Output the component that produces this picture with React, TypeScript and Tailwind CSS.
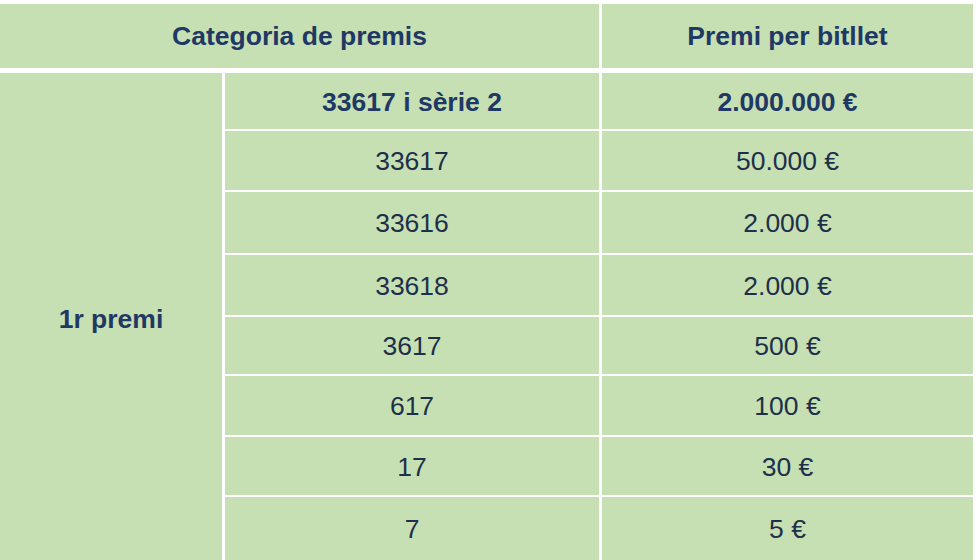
import React from 'react';

const rows: { num: string; prize: string; height: string; bold?: boolean }[] = [
  { num: '33617 i sèrie 2', prize: '2.000.000 €', height: 'h-[56px]', bold: true },
  { num: '33617', prize: '50.000 €', height: 'h-[59px]' },
  { num: '33616', prize: '2.000 €', height: 'h-[61px]' },
  { num: '33618', prize: '2.000 €', height: 'h-[60px]' },
  { num: '3617', prize: '500 €', height: 'h-[57px]' },
  { num: '617', prize: '100 €', height: 'h-[59px]' },
  { num: '17', prize: '30 €', height: 'h-[58px]' },
  { num: '7', prize: '5 €', height: 'h-[63px]' },
];

const App: React.FC = () => {
  return (
    <div
      className="w-[980px] h-[560px] overflow-hidden bg-white pt-1 pr-[7px] text-[26.5px] text-[#1f3864]"
      style={{ fontFamily: '"Liberation Sans", Arial, sans-serif' }}
    >
      <div className="grid h-[64px] grid-cols-[599px_1fr] gap-x-[3px]">
        <div className="flex items-center justify-center bg-[#c6e0b4] pt-[2px] font-bold">Categoria de premis</div>
        <div className="flex items-center justify-center bg-[#c6e0b4] pt-[2px] font-bold">Premi per bitllet</div>
      </div>
      <div className="mt-[5px] flex gap-x-[3px]">
        <div className="flex w-[222px] shrink-0 items-center justify-center bg-[#c6e0b4] pt-[6px] font-bold">
          1r premi
        </div>
        <div className="flex flex-1 flex-col gap-y-[2px]">
          {rows.map((row) => (
            <div key={row.num + row.prize} className={`grid grid-cols-[374px_1fr] gap-x-[3px] ${row.height}`}>
              <div className={`flex items-center justify-center bg-[#c6e0b4] pt-[3px] ${row.bold ? 'font-bold' : 'text-[#1e2f4a]'}`}>
                {row.num}
              </div>
              <div className={`flex items-center justify-center bg-[#c6e0b4] pt-[3px] ${row.bold ? 'font-bold' : 'text-[#1e2f4a]'}`}>
                {row.prize}
              </div>
            </div>
          ))}
        </div>
      </div>
    </div>
  );
};

export default App;
